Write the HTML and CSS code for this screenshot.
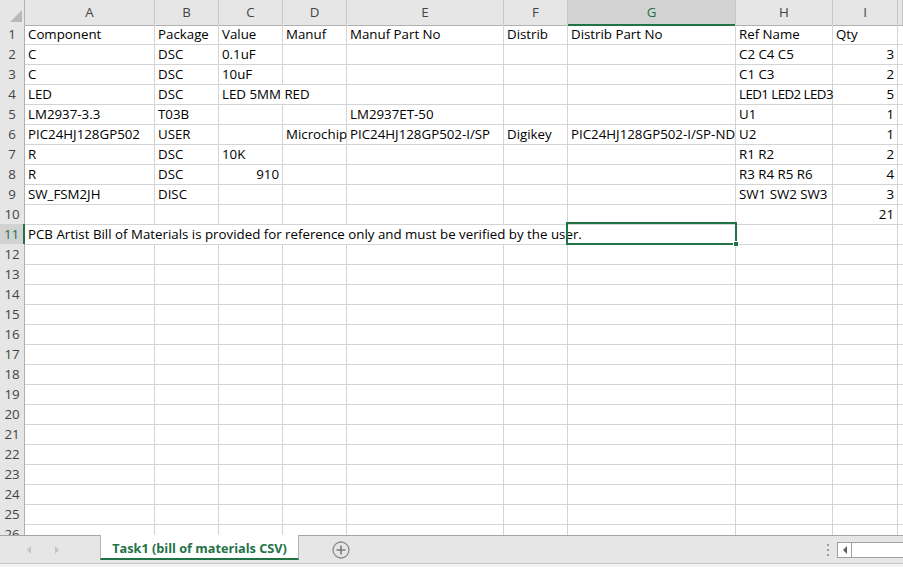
FILE: index.html
```html
<!DOCTYPE html>
<html>
<head>
<meta charset="utf-8">
<link rel="stylesheet" href="styles.css">
</head>
<body>
<div class="app">
  <div class="sheet">
    <div class="row head">
      <span class="corner"><svg width="12" height="12" viewBox="0 0 12 12"><polygon points="12,0 12,12 0,12" fill="#b9b9b9"/></svg></span>
      <span>A</span><span>B</span><span>C</span><span>D</span><span>E</span><span>F</span><span class="sel-col">G</span><span>H</span><span>I</span><span></span>
    </div>
    <div class="row"><span class="rh">1</span><span>Component</span><span>Package</span><span>Value</span><span>Manuf</span><span>Manuf Part No</span><span>Distrib</span><span>Distrib Part No</span><span>Ref Name</span><span>Qty</span><span></span></div>
    <div class="row"><span class="rh">2</span><span>C</span><span>DSC</span><span>0.1uF</span><span></span><span></span><span></span><span></span><span>C2 C4 C5</span><span class="num">3</span><span></span></div>
    <div class="row"><span class="rh">3</span><span>C</span><span>DSC</span><span>10uF</span><span></span><span></span><span></span><span></span><span>C1 C3</span><span class="num">2</span><span></span></div>
    <div class="row"><span class="rh">4</span><span>LED</span><span>DSC</span><span class="span2">LED 5MM RED</span><span></span><span></span><span></span><span class="tight">LED1 LED2 LED3</span><span class="num">5</span><span></span></div>
    <div class="row"><span class="rh">5</span><span>LM2937-3.3</span><span>T03B</span><span></span><span></span><span>LM2937ET-50</span><span></span><span></span><span>U1</span><span class="num">1</span><span></span></div>
    <div class="row"><span class="rh">6</span><span>PIC24HJ128GP502</span><span>USER</span><span></span><span>Microchip</span><span>PIC24HJ128GP502-I/SP</span><span>Digikey</span><span>PIC24HJ128GP502-I/SP-ND</span><span>U2</span><span class="num">1</span><span></span></div>
    <div class="row"><span class="rh">7</span><span>R</span><span>DSC</span><span>10K</span><span></span><span></span><span></span><span></span><span>R1 R2</span><span class="num">2</span><span></span></div>
    <div class="row"><span class="rh">8</span><span>R</span><span>DSC</span><span class="num">910</span><span></span><span></span><span></span><span></span><span>R3 R4 R5 R6</span><span class="num">4</span><span></span></div>
    <div class="row"><span class="rh">9</span><span>SW_FSM2JH</span><span>DISC</span><span></span><span></span><span></span><span></span><span></span><span>SW1 SW2 SW3</span><span class="num">3</span><span></span></div>
    <div class="row"><span class="rh">10</span><span></span><span></span><span></span><span></span><span></span><span></span><span></span><span></span><span class="num">21</span><span></span></div>
    <div class="row"><span class="rh sel-row">11</span><span class="note">PCB Artist Bill of Materials is provided for reference only and must be verified by the user.</span><span class="active"><i class="handle"></i></span><span></span><span></span><span></span></div>
    <div class="row"><span class="rh">12</span><span></span><span></span><span></span><span></span><span></span><span></span><span></span><span></span><span></span><span></span></div>
    <div class="row"><span class="rh">13</span><span></span><span></span><span></span><span></span><span></span><span></span><span></span><span></span><span></span><span></span></div>
    <div class="row"><span class="rh">14</span><span></span><span></span><span></span><span></span><span></span><span></span><span></span><span></span><span></span><span></span></div>
    <div class="row"><span class="rh">15</span><span></span><span></span><span></span><span></span><span></span><span></span><span></span><span></span><span></span><span></span></div>
    <div class="row"><span class="rh">16</span><span></span><span></span><span></span><span></span><span></span><span></span><span></span><span></span><span></span><span></span></div>
    <div class="row"><span class="rh">17</span><span></span><span></span><span></span><span></span><span></span><span></span><span></span><span></span><span></span><span></span></div>
    <div class="row"><span class="rh">18</span><span></span><span></span><span></span><span></span><span></span><span></span><span></span><span></span><span></span><span></span></div>
    <div class="row"><span class="rh">19</span><span></span><span></span><span></span><span></span><span></span><span></span><span></span><span></span><span></span><span></span></div>
    <div class="row"><span class="rh">20</span><span></span><span></span><span></span><span></span><span></span><span></span><span></span><span></span><span></span><span></span></div>
    <div class="row"><span class="rh">21</span><span></span><span></span><span></span><span></span><span></span><span></span><span></span><span></span><span></span><span></span></div>
    <div class="row"><span class="rh">22</span><span></span><span></span><span></span><span></span><span></span><span></span><span></span><span></span><span></span><span></span></div>
    <div class="row"><span class="rh">23</span><span></span><span></span><span></span><span></span><span></span><span></span><span></span><span></span><span></span><span></span></div>
    <div class="row"><span class="rh">24</span><span></span><span></span><span></span><span></span><span></span><span></span><span></span><span></span><span></span><span></span></div>
    <div class="row"><span class="rh">25</span><span></span><span></span><span></span><span></span><span></span><span></span><span></span><span></span><span></span><span></span></div>
    <div class="row"><span class="rh">26</span><span></span><span></span><span></span><span></span><span></span><span></span><span></span><span></span><span></span><span></span></div>
  </div>
  <div class="tabbar">
    <div class="nav">
      <svg width="8" height="10" viewBox="0 0 8 10"><polygon points="6,1 2,5 6,9" fill="#c3c3c3"/></svg>
      <svg width="8" height="10" viewBox="0 0 8 10"><polygon points="2,1 6,5 2,9" fill="#c3c3c3"/></svg>
    </div>
    <div class="tab">Task1 (bill of materials CSV)</div>
    <div class="add">
      <svg width="20" height="20" viewBox="0 0 20 20"><circle cx="10" cy="10" r="8" fill="none" stroke="#8a8a8a" stroke-width="1.3"/><path d="M10 5.5V14.5M5.5 10H14.5" stroke="#7a7a7a" stroke-width="1.6"/></svg>
    </div>
    <div class="spacer"></div>
    <div class="dots"><i></i><i></i><i></i></div>
    <div class="hscroll">
      <span class="arrow"><svg width="6" height="8" viewBox="0 0 6 8"><polygon points="5,0 1,4 5,8" fill="#606060"/></svg></span>
      <span class="track"></span>
    </div>
  </div>
  <div class="status"></div>
</div>
</body>
</html>
```

FILE: styles.css
```css
* { box-sizing: border-box; }
html, body { margin: 0; padding: 0; background: #fff; }
body {
  width: 903px;
  height: 567px;
  overflow: hidden;
  font-family: "Open Sans", "Liberation Sans", sans-serif;
  font-size: 13.3px;
  color: #000;
}
.app { display: flex; flex-direction: column; height: 567px; }
.sheet { height: 535px; overflow: hidden; flex: none; }
.row {
  display: grid;
  grid-template-columns: 25px 130px 64px 64px 64px 157px 64px 168px 97px 65px 5px;
  height: 20px;
}
.row > span {
  border-right: 1px solid #d4d4d4;
  border-bottom: 1px solid #d4d4d4;
  padding: 1px 3px 0 3px;
  line-height: 19px;
  white-space: nowrap;
  overflow: visible;
  position: relative;
}
.row > span.span2 { grid-column: span 2; }
.row > span.num { text-align: right; }
.row > span.tight { letter-spacing: -0.55px; }
.row > span.note { grid-column: span 6; border-right: none; z-index: 1; }
.row > span.rh {
  background: #e6e6e6;
  color: #444;
  text-align: center;
  padding: 1px 0 0 0;
  border-right: 1px solid #b1b1b1;
  border-bottom: 1px solid #c8c8c8;
}
.row > span.sel-row {
  background: #d2d2d2;
  color: #217346;
  border-right: 2px solid #217346;
}
.row.head { height: 24px; }
.row.head > span {
  background: #e6e6e6;
  color: #444;
  text-align: center;
  border-right: 1px solid #c8c8c8;
  border-bottom: 1px solid #b1b1b1;
  line-height: 23px;
  padding: 1px 0 0 0;
}
.row.head > span.corner {
  display: flex;
  align-items: flex-end;
  justify-content: flex-end;
  padding: 0 2px 3px 0;
  border-right: 1px solid #b1b1b1;
}
.row.head > span.sel-col {
  background: #d2d2d2;
  color: #217346;
  border-bottom: 2px solid #217346;
}
.row > span.active {
  outline: 2px solid #217346;
  outline-offset: -1px;
  z-index: 2;
  margin-left: -1px;
  margin-top: -1px;
  height: 21px;
}
.handle {
  position: absolute;
  right: -4px;
  bottom: -4px;
  width: 6px;
  height: 6px;
  background: #217346;
  border: 1px solid #fff;
}
.tabbar {
  flex: none;
  height: 28px;
  background: #e6e6e6;
  border-top: 1px solid #a5a5a5;
  display: flex;
  align-items: stretch;
}
.nav {
  width: 100px;
  display: flex;
  align-items: center;
  justify-content: center;
  gap: 20px;
  padding-right: 14px;
}
.tab {
  width: 199px;
  margin-top: -1px;
  background: #fff;
  border-left: 1px solid #b4b4b4;
  border-right: 1px solid #b4b4b4;
  border-bottom: 2px solid #217346;
  color: #217346;
  font-weight: bold;
  font-size: 12.7px;
  display: flex;
  align-items: center;
  justify-content: center;
  padding-top: 2px;
  height: 25px;
}
.add {
  width: 84px;
  display: flex;
  align-items: center;
  justify-content: center;
  padding-top: 1px;
}
.spacer { flex: 1; }
.dots {
  width: 18px;
  display: flex;
  flex-direction: column;
  align-items: center;
  justify-content: center;
  gap: 3px;
}
.dots i { display: block; width: 2px; height: 2px; background: #9a9a9a; }
.hscroll {
  width: 66px;
  margin-left: 0;
  display: flex;
  align-items: center;
}
.hscroll .arrow {
  width: 15px;
  height: 16px;
  background: #fff;
  border: 1px solid #a0a0a0;
  display: flex;
  align-items: center;
  justify-content: center;
}
.hscroll .track {
  flex: 1;
  height: 16px;
  background: #fff;
  border-top: 1px solid #a0a0a0;
  border-bottom: 1px solid #a0a0a0;
}
.status {
  flex: none;
  height: 4px;
  background: #f3f3f3;
  border-top: 1px solid #c6c6c6;
}
```
